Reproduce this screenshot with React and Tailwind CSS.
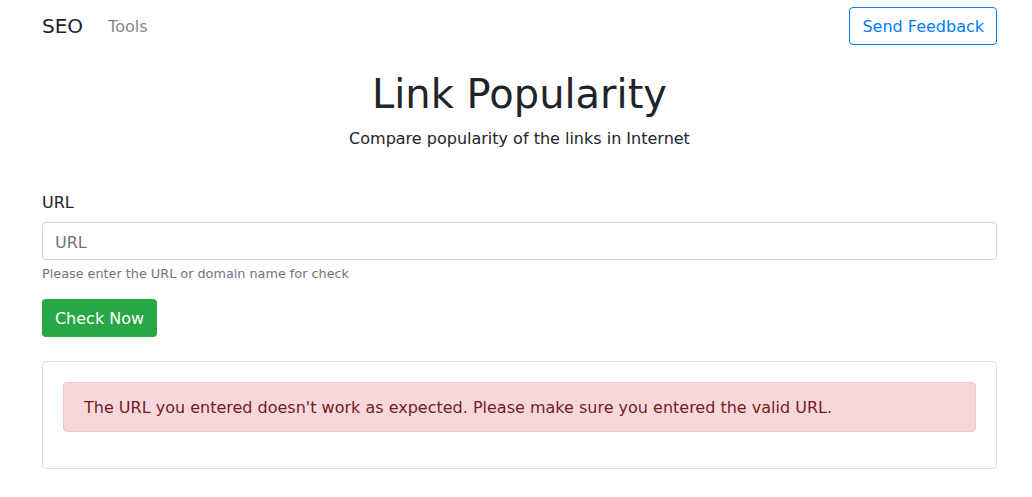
export default function App() {
  return (
    <div className="min-h-screen bg-white text-[#212529] font-['DejaVu_Sans',sans-serif] text-base">
      {/* navbar */}
      <nav className="ml-[42px] w-[955px] flex items-center justify-between py-[7px]">
        <div className="flex items-center">
          <span className="text-[20px] leading-[30px] mr-[25px]">SEO</span>
          <span className="text-black/50 leading-6 translate-y-px">Tools</span>
        </div>
        <button className="h-[38px] px-3 pt-[2px] rounded border border-[#007bff] text-[#007bff] leading-6">
          Send Feedback
        </button>
      </nav>

      <main className="ml-[42px] w-[955px]">
        <div className="text-center pt-[18px]">
          <h1 className="text-[40px] leading-[48px]">Link Popularity</h1>
          <p className="mt-[9px] leading-6">Compare popularity of the links in Internet</p>
        </div>

        <div className="mt-[40px]">
          <label className="block leading-6">URL</label>
          <input
            placeholder="URL"
            className="mt-[7px] block w-full h-[38px] px-3 pt-[2px] rounded border border-[#ced4da] placeholder:text-[#6c757d] outline-none"
          />
          <small className="block mt-[4px] text-[12.8px] leading-[19px] text-[#6c757d]">
            Please enter the URL or domain name for check
          </small>
          <button className="mt-[16px] h-[38px] w-[115px] pt-[2px] rounded bg-[#28a745] text-white leading-6">
            Check Now
          </button>
        </div>

        <div className="mt-[24px] border border-black/[0.125] rounded p-5">
          <div className="mb-4 px-5 pt-[13px] pb-[11px] rounded border border-[#f5c6cb] bg-[#f8d7da] text-[#721c24] leading-6">
            The URL you entered doesn't work as expected. Please make sure you entered the valid URL.
          </div>
        </div>
      </main>
    </div>
  );
}
